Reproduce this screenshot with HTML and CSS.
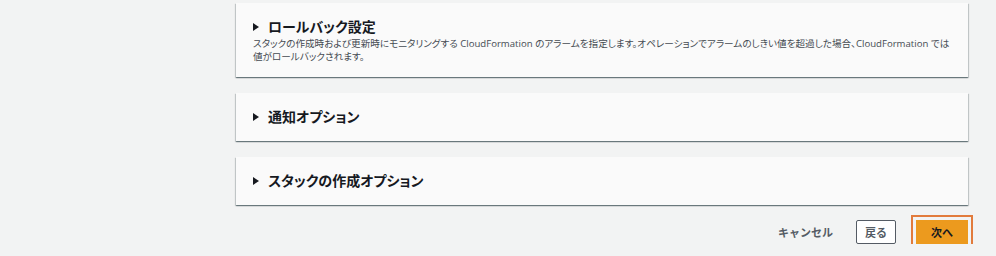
FILE: index.html
```html
<!DOCTYPE html>
<html lang="ja">
<head>
    <meta charset="UTF-8">
    <title>スタックオプションの設定</title>
    <link rel="stylesheet" href="styles.css">
</head>
<body>
    <div class="page">
        <div class="panel">
            <div class="panel-header">
                <span class="caret"></span>
                <h2>ロールバック設定</h2>
            </div>
            <p class="panel-desc">スタックの作成時および更新時にモニタリングする CloudFormation のアラームを指定します。オペレーションでアラームのしきい値を超過した場合、CloudFormation では値がロールバックされます。</p>
        </div>
        <div class="panel">
            <div class="panel-header">
                <span class="caret"></span>
                <h2>通知オプション</h2>
            </div>
        </div>
        <div class="panel">
            <div class="panel-header">
                <span class="caret"></span>
                <h2>スタックの作成オプション</h2>
            </div>
        </div>
        <div class="actions">
            <button type="button" class="btn-link">キャンセル</button>
            <button type="button" class="btn-normal">戻る</button>
            <button type="button" class="btn-primary">次へ</button>
        </div>
    </div>
</body>
</html>
```

FILE: styles.css
```css
body {
    margin: 0;
    background-color: #f2f3f3;
    font-family: "Open Sans", "Noto Sans CJK JP", sans-serif;
    color: #16191f;
}
.page {
    display: flex;
    flex-direction: column;
    gap: 16px;
    padding: 3px 28px 0 236px;
}
.panel {
    background-color: #fafafa;
    padding: 14px 14px 14px 17px;
    box-shadow: 0 1px 1px 0 rgba(0, 28, 36, 0.4), 1px 1px 1px 0 rgba(0, 28, 36, 0.15), -1px 1px 1px 0 rgba(0, 28, 36, 0.15);
}
.panel-header {
    display: flex;
    align-items: center;
    gap: 9px;
}
.caret {
    width: 0;
    height: 0;
    border-top: 4px solid transparent;
    border-bottom: 4px solid transparent;
    border-left: 6px solid #16191f;
}
h2 {
    margin: 0;
    font-size: 14px;
    line-height: 20px;
    font-weight: 700;
    font-feature-settings: "palt";
}
.panel-desc {
    margin: 0;
    font-size: 9.6px;
    line-height: 13px;
    color: #454b52;
    font-feature-settings: "palt";
}
.actions {
    display: flex;
    justify-content: flex-end;
    align-items: center;
    gap: 20px;
    margin-top: -1px;
}
button {
    font-family: "Open Sans", "Noto Sans CJK JP", sans-serif;
    font-size: 11px;
    font-weight: 700;
    height: 24px;
    padding: 0 8px;
    border-radius: 2px;
    cursor: pointer;
}
.btn-link {
    background: none;
    border: none;
    color: #545b64;
    padding: 0 3px 0 0;
}
.btn-normal {
    background-color: #fff;
    border: 1px solid #545b64;
    color: #545b64;
}
.btn-primary {
    background-color: #ec9a1e;
    border: 1px solid #ec9a1e;
    color: #16191f;
    padding: 0 14px;
    border-radius: 0;
    outline: 2px solid #e27b3c;
    outline-offset: 3px;
}
```
